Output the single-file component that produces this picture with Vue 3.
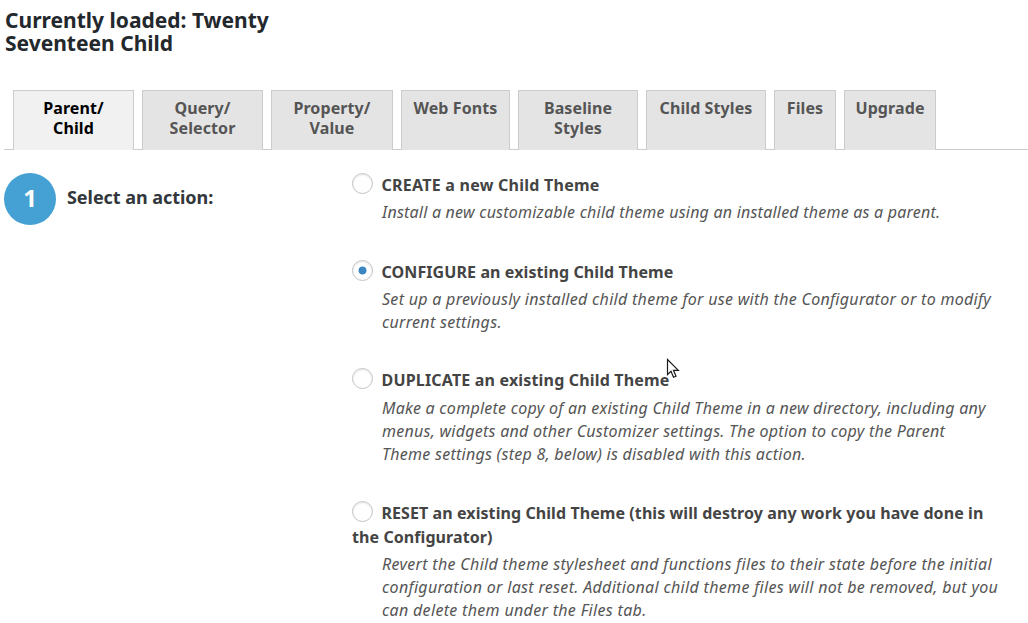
<script setup>
const tabs = [
  { label: ['Parent/', 'Child'], width: 121, active: true },
  { label: ['Query/', 'Selector'], width: 121 },
  { label: ['Property/', 'Value'], width: 122 },
  { label: ['Web Fonts'], width: 109 },
  { label: ['Baseline', 'Styles'], width: 120 },
  { label: ['Child Styles'], width: 120 },
  { label: ['Files'], width: 62 },
  { label: ['Upgrade'], width: 92 }
]

// Title and description tracking differ per block, the fallback font runs
// narrower than the original by a different amount on each line.
const actions = [
  {
    id: 'create',
    titleTrack: 0.25,
    descTrack: 0.22,
    title: ['CREATE a new Child Theme'],
    lines: ['Install a new customizable child theme using an installed theme as a parent.']
  },
  {
    id: 'configure',
    checked: true,
    titleTrack: 0.1,
    descTrack: 0.29,
    title: ['CONFIGURE an existing Child Theme'],
    lines: [
      'Set up a previously installed child theme for use with the Configurator or to modify',
      'current settings.'
    ]
  },
  {
    id: 'duplicate',
    titleTrack: 0.18,
    descTrack: 0.26,
    title: ['DUPLICATE an existing Child Theme'],
    lines: [
      'Make a complete copy of an existing Child Theme in a new directory, including any',
      'menus, widgets and other Customizer settings. The option to copy the Parent',
      'Theme settings (step 8, below) is disabled with this action.'
    ]
  },
  {
    id: 'reset',
    titleTrack: 0.08,
    descTrack: 0.32,
    title: ['RESET an existing Child Theme (this will destroy any work you have done in', 'the Configurator)'],
    lines: [
      'Revert the Child theme stylesheet and functions files to their state before the initial',
      'configuration or last reset. Additional child theme files will not be removed, but you',
      'can delete them under the Files tab.'
    ]
  }
]
</script>

<template>
  <div class="page">
    <h2 class="loaded">Currently loaded: Twenty<br />Seventeen Child</h2>

    <div class="tabs">
      <a
        v-for="tab in tabs"
        :key="tab.label[0]"
        class="tab"
        :class="{ 'tab--active': tab.active }"
        :style="{ width: tab.width + 'px' }"
      >
        <span v-for="line in tab.label" :key="line" class="tab-line">{{ line }}</span>
      </a>
    </div>

    <div class="panel">
      <div class="step">
        <span class="step-num">1</span>
        <strong class="step-label">Select an action:</strong>
      </div>

      <div class="options">
        <div
          v-for="action in actions"
          :key="action.id"
          class="option"
          :class="'option--' + action.id"
        >
          <div class="option-title" :style="{ letterSpacing: action.titleTrack + 'px' }">
            <span class="radio" :class="{ 'radio--on': action.checked }"></span>
            <strong class="title-first">{{ action.title[0] }}</strong>
            <strong v-if="action.title[1]" class="title-rest">{{ action.title[1] }}</strong>
          </div>
          <p
            v-for="line in action.lines"
            :key="line"
            class="desc"
            :style="{ letterSpacing: action.descTrack + 'px' }"
          >{{ line }}</p>
        </div>
      </div>
    </div>

    <svg class="cursor" viewBox="0 0 14 21" width="14" height="21" aria-hidden="true">
      <path d="M1.5 1.5v15l3.5-3.3 2.5 6 2.5-1-2.5-5.9h4.8z" fill="#fff" stroke="#1c1c1c" stroke-width="1.2" stroke-linejoin="miter" />
    </svg>
  </div>
</template>

<style scoped>
.page {
  position: relative;
  height: 623px;
  overflow: hidden;
  font-family: "Noto Sans", "Open Sans", sans-serif;
  color: #444;
}

.loaded {
  margin: 0;
  padding: 9px 0 0 5px;
  font-size: 21px;
  line-height: 23px;
  font-weight: 700;
  color: #23282d;
}

.tabs {
  display: flex;
  gap: 8px;
  margin-top: 35px;
  margin-left: 4px;
  padding-left: 9px;
  height: 60px;
  box-sizing: border-box;
  border-bottom: 1px solid #ccc;
}

.tab {
  box-sizing: border-box;
  height: 60px;
  padding-top: 7px;
  display: flex;
  flex-direction: column;
  align-items: center;
  background: #e4e4e4;
  border: 1px solid #ccc;
  border-bottom: 0;
  color: #555;
  font-size: 16px;
  line-height: 20px;
  font-weight: 700;
  letter-spacing: 0.1px;
}

.tab--active {
  background: #f1f1f1;
  color: #000;
}

.tab-line {
  white-space: nowrap;
}

.panel {
  display: flex;
  padding: 23px 0 0 4px;
}

.step {
  width: 348px;
  flex-shrink: 0;
  display: flex;
  align-items: flex-start;
  gap: 11px;
}

.step-num {
  width: 52px;
  height: 52px;
  padding-bottom: 3px;
  box-sizing: border-box;
  border-radius: 50%;
  background: #45a0d3;
  color: #fff;
  display: flex;
  align-items: center;
  justify-content: center;
  font-size: 24px;
  font-weight: 700;
}

.step-label {
  margin-top: 13px;
  font-size: 18px;
  line-height: 22px;
  letter-spacing: -0.05px;
  color: #32373c;
}

.options {
  flex: 1;
  min-width: 0;
}

.option {
  padding-bottom: 36px;
}

.option--configure {
  padding-bottom: 34px;
}

.option--duplicate {
  padding-bottom: 35px;
}

.option-title {
  min-height: 24px;
  font-size: 16px;
  line-height: 24px;
  color: #444;
  white-space: nowrap;
}

.radio {
  display: inline-block;
  box-sizing: border-box;
  width: 21px;
  height: 21px;
  margin-left: -0.5px;
  margin-right: 9px;
  vertical-align: -3px;
  border: 1px solid #c0c4c8;
  border-radius: 50%;
  background: #fff;
  box-shadow: inset 0 1px 2px rgba(0, 0, 0, 0.1);
}

.radio--on {
  background: radial-gradient(circle, #3c86c2 0, #3c86c2 3.6px, #fff 4.4px);
}

.title-rest {
  display: block;
}

.desc {
  margin: 0;
  padding-left: 30px;
  font-size: 16px;
  line-height: 23px;
  font-style: italic;
  color: #555;
  white-space: nowrap;
}

.option-title + .desc {
  margin-top: 4px;
}

.option--duplicate .option-title + .desc {
  margin-top: 5px;
}

.cursor {
  position: absolute;
  left: 666px;
  top: 358px;
}
</style>

<style>
body {
  background: #fff;
}
</style>
